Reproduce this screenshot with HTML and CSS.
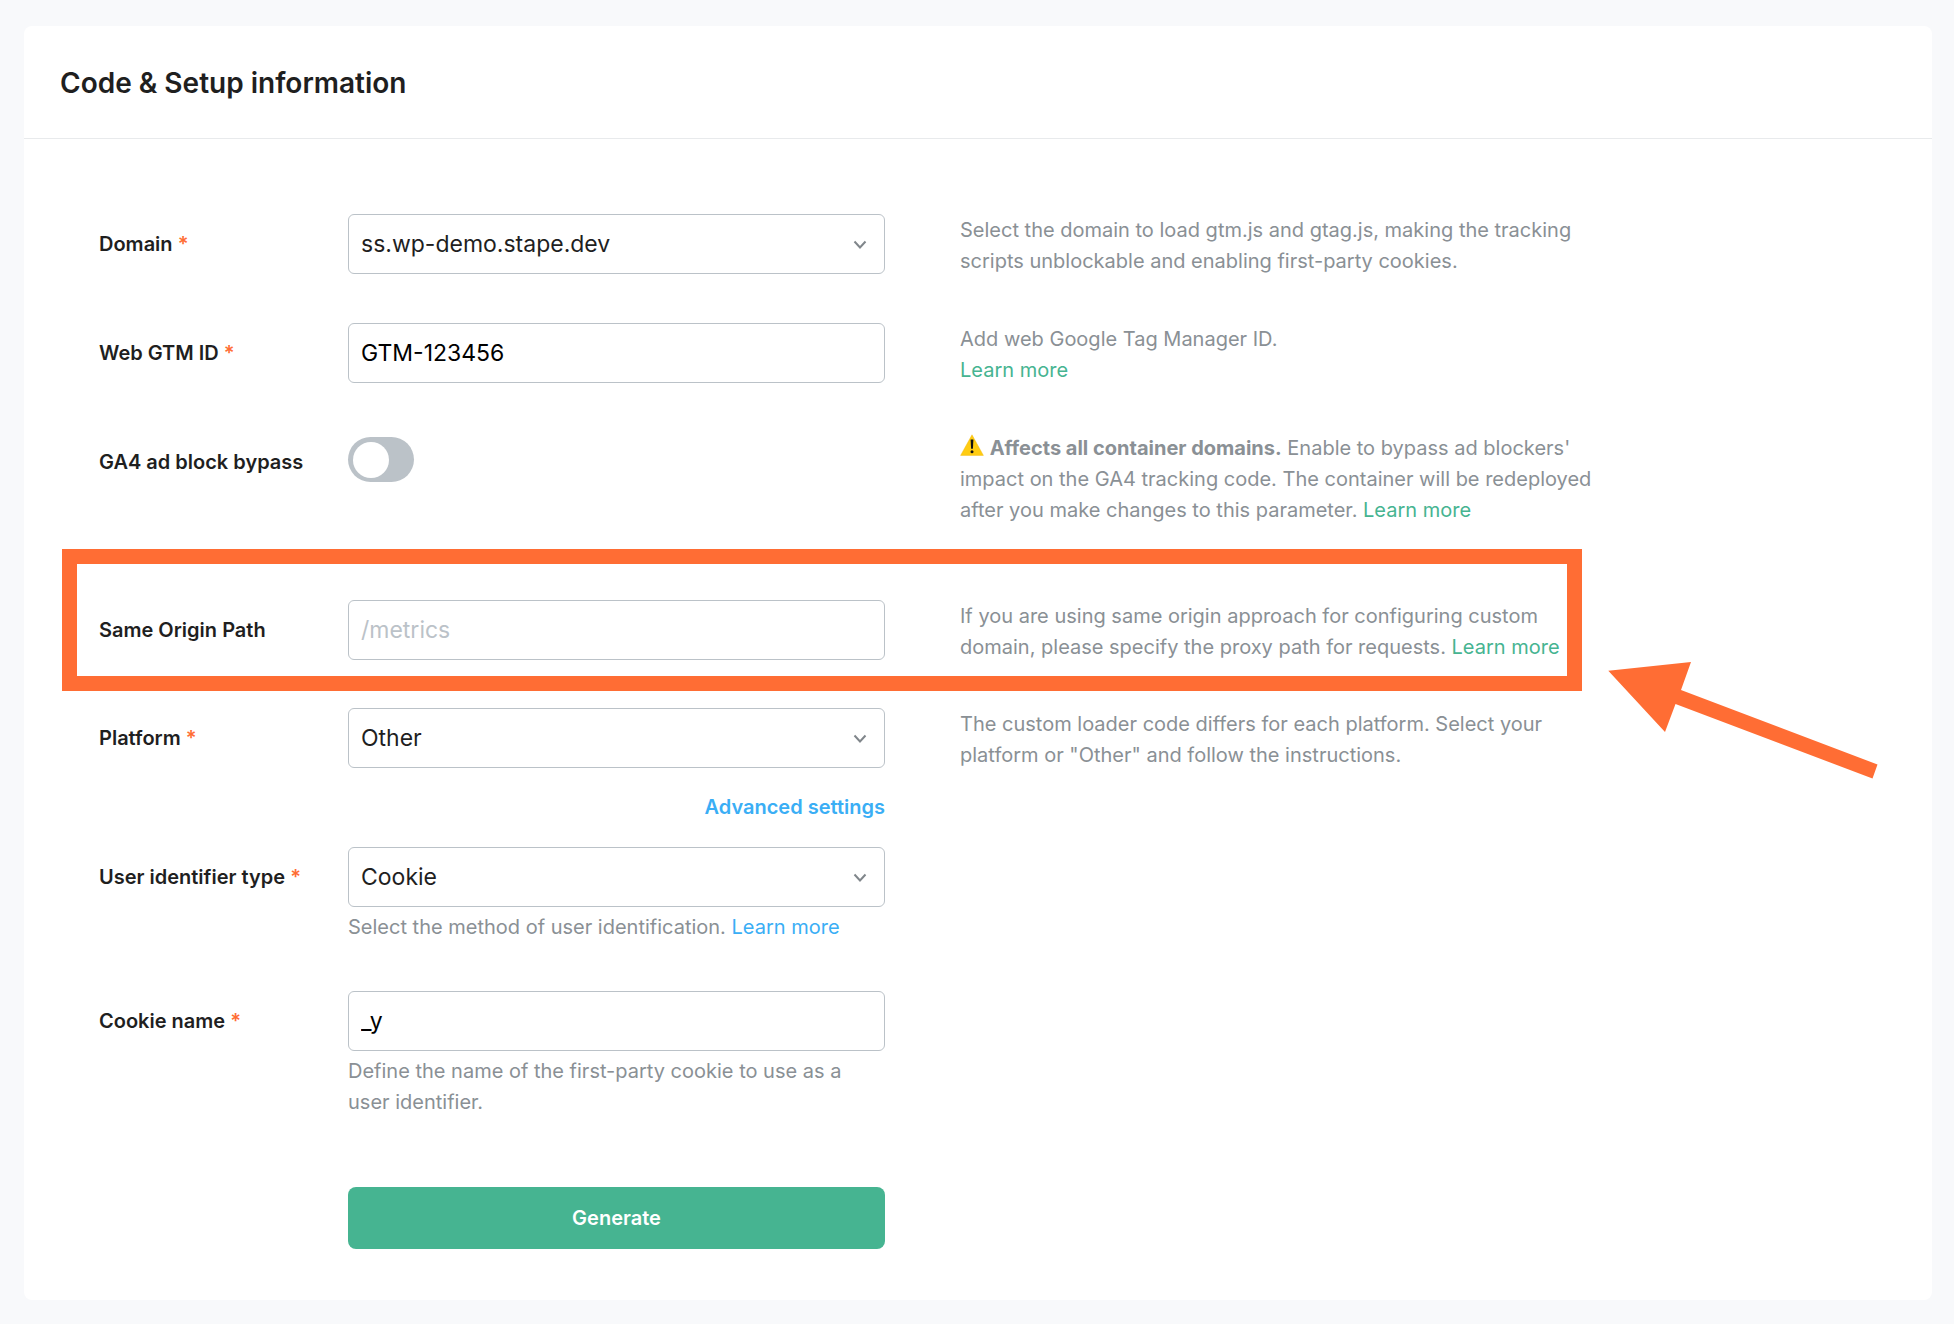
FILE: index.html
```html
<!DOCTYPE html>
<html lang="en">
<head>
<meta charset="UTF-8">
<meta name="viewport" content="width=device-width, initial-scale=1.0">
<title>Code &amp; Setup information</title>
<link rel="stylesheet" href="styles.css">
</head>
<body>
<main class="card">
  <header class="card-header">
    <h1>Code &amp; Setup information</h1>
  </header>

  <form class="setup-form">
    <div class="row">
      <label class="label" for="domain">Domain <span class="required">*</span></label>
      <div class="control">
        <div class="select">
          <select id="domain">
            <option>ss.wp-demo.stape.dev</option>
          </select>
          <svg class="chevron" viewBox="0 0 14 10"><path d="M1.5 1.5 7 7.5 12.5 1.5"/></svg>
        </div>
      </div>
      <p class="help">Select the domain to load gtm.js and gtag.js, making the tracking scripts unblockable and enabling first-party cookies.</p>
    </div>

    <div class="row">
      <label class="label" for="gtmId">Web GTM ID <span class="required">*</span></label>
      <div class="control">
        <input class="input" type="text" id="gtmId" value="GTM-123456">
      </div>
      <p class="help">Add web Google Tag Manager ID.<br><a href="#">Learn more</a></p>
    </div>

    <div class="row">
      <label class="label" for="bypass">GA4 ad block bypass</label>
      <div class="control">
        <input class="toggle" type="checkbox" id="bypass">
      </div>
      <p class="help">
        <svg class="warning" viewBox="0 0 24 22">
          <path d="M12 .8 23.4 21.4H.6z" fill="#ffcc12" stroke="#f0b400" stroke-width=".4" stroke-linejoin="round"/>
          <path d="M10.6 5.6h2.8l-.5 9.2h-1.8z" fill="#111"/>
          <circle cx="12" cy="17.8" r="1.5" fill="#111"/>
        </svg>
        <strong>Affects all container domains.</strong> Enable to bypass ad blockers' impact on the GA4 tracking code. The container will be redeployed after you make changes to this parameter. <a href="#">Learn more</a>
      </p>
    </div>

    <div class="row row-highlight">
      <label class="label" for="originPath">Same Origin Path</label>
      <div class="control">
        <input class="input" type="text" id="originPath" placeholder="/metrics">
      </div>
      <p class="help">If you are using same origin approach for configuring custom domain, please specify the proxy path for requests. <a href="#">Learn more</a></p>
      <svg class="arrow" viewBox="0 0 270 117"><path d="M.3 8.7 83 0 73 28 269.5 102.5 264.5 116.5 67.5 42 57 70z"/></svg>
    </div>

    <div class="row">
      <label class="label" for="platform">Platform <span class="required">*</span></label>
      <div class="control">
        <div class="select">
          <select id="platform">
            <option>Other</option>
          </select>
          <svg class="chevron" viewBox="0 0 14 10"><path d="M1.5 1.5 7 7.5 12.5 1.5"/></svg>
        </div>
      </div>
      <p class="help">The custom loader code differs for each platform. Select your platform or "Other" and follow the instructions.</p>
    </div>

    <div class="row row-advanced">
      <button class="advanced" type="button">Advanced settings</button>
    </div>

    <div class="row">
      <label class="label" for="identifier">User identifier type <span class="required">*</span></label>
      <div class="control">
        <div class="select">
          <select id="identifier">
            <option>Cookie</option>
          </select>
          <svg class="chevron" viewBox="0 0 14 10"><path d="M1.5 1.5 7 7.5 12.5 1.5"/></svg>
        </div>
        <p class="hint">Select the method of user identification. <a href="#">Learn more</a></p>
      </div>
    </div>

    <div class="row">
      <label class="label" for="cookieName">Cookie name <span class="required">*</span></label>
      <div class="control">
        <input class="input" type="text" id="cookieName" value="_y">
        <p class="hint">Define the name of the first-party cookie to use as a user identifier.</p>
      </div>
    </div>

    <div class="row row-submit">
      <button class="generate" type="submit">Generate</button>
    </div>
  </form>
</main>
</body>
</html>
```

FILE: styles.css
```css
*,
*::before,
*::after {
  box-sizing: border-box;
}

body {
  margin: 0;
  padding: 26px 22px 24px 24px;
  background-color: #f8f9fb;
  color: #1f1f1f;
  font-family: Inter, "Liberation Sans", sans-serif;
  font-size: 20px;
  line-height: 31px;
}

h1,
p {
  margin: 0;
}

a {
  color: #46b491;
  text-decoration: none;
}

.card {
  background-color: #fff;
  border-radius: 8px;
}

.card-header {
  padding: 39px 36px 37px;
  border-bottom: 1px solid #e8eaec;
}

.card-header h1 {
  font-size: 28px;
  line-height: 36px;
  font-weight: 600;
}

.setup-form {
  display: flex;
  flex-direction: column;
  gap: 46px;
  padding: 75px 75px 51px;
}

.row {
  display: grid;
  grid-template-columns: 249px minmax(0, 537px) minmax(0, 715px);
  position: relative;
}

.label {
  height: 60px;
  line-height: 61px;
  font-weight: 600;
}

.required {
  color: #ff6d34;
}

.help {
  padding-top: 1px;
  padding-left: 75px;
  color: #8a9095;
}

.hint {
  padding: 5px 0 2px;
  color: #8a9095;
}

.hint a {
  color: #3aaef5;
}

.input,
.select select {
  display: block;
  width: 100%;
  height: 60px;
  padding: 0 12px;
  border: 1px solid #bbc2c8;
  border-radius: 6px;
  background-color: #fff;
  color: #000;
  font-family: inherit;
  font-size: 23px;
}

.select {
  position: relative;
}

.select select {
  appearance: none;
  color: #1f1f1f;
}

.input::placeholder {
  color: #bbc2c8;
  opacity: 1;
}

.chevron {
  position: absolute;
  top: 26px;
  right: 18px;
  width: 14px;
  height: 10px;
  fill: none;
  stroke: #80868b;
  stroke-width: 2;
  pointer-events: none;
}

.toggle {
  display: block;
  appearance: none;
  width: 66px;
  height: 45px;
  margin: 5px 0 0;
  padding: 5px;
  border-radius: 23px;
  background-color: #bbc2c8;
}

.toggle::before {
  content: "";
  display: block;
  width: 36px;
  height: 36px;
  border-radius: 50%;
  background-color: #fff;
}

.toggle:checked {
  background-color: #46b491;
}

.toggle:checked::before {
  margin-left: auto;
}

.warning {
  width: 24px;
  height: 22px;
  vertical-align: -1px;
}

/* orange frame around the highlighted row */
.row-highlight {
  margin-top: 28px;
  margin-bottom: -1px;
}

.row-highlight::after {
  content: "";
  position: absolute;
  top: -51px;
  bottom: -28px;
  left: -37px;
  width: 1520px;
  border: 15px solid #ff6d34;
  pointer-events: none;
}

.arrow {
  position: absolute;
  top: 62px;
  left: 1509px;
  width: 270px;
  height: 117px;
  fill: #ff6d34;
}

.row-advanced {
  margin: -25px 0 -22px;
}

.advanced {
  grid-column: 2;
  justify-self: end;
  padding: 0;
  border: 0;
  background: none;
  color: #3aaef5;
  font-family: inherit;
  font-size: 20px;
  font-weight: 600;
  line-height: 31px;
}

.row-submit {
  margin-top: 21px;
}

.generate {
  grid-column: 2;
  height: 62px;
  border: 0;
  border-radius: 8px;
  background-color: #46b491;
  color: #fff;
  font-family: inherit;
  font-size: 20px;
  font-weight: 600;
}
```
